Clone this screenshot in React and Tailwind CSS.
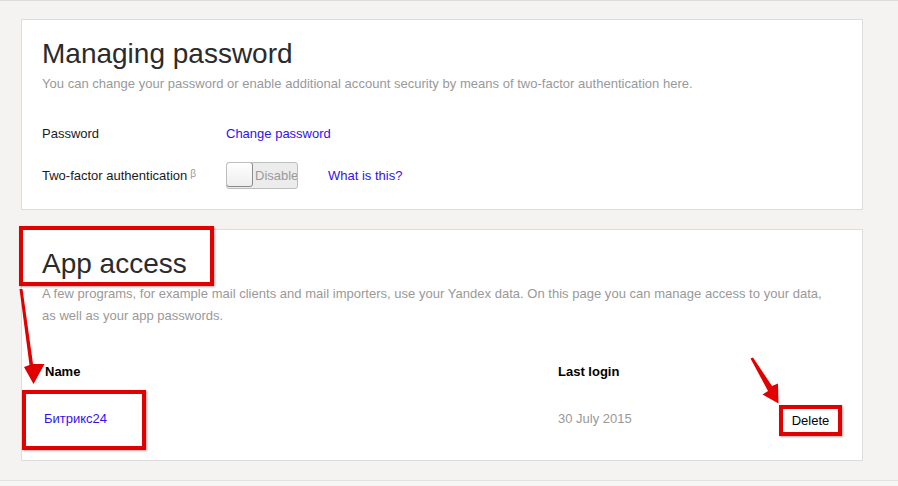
const font = { fontFamily: '"Liberation Sans", Arial, sans-serif' };

function Toggle() {
  return (
    <div className="relative flex h-[27px] w-[72px] overflow-hidden rounded-[3px] border border-[#bdbdbd] bg-[#ececec]">
      <div className="h-full w-[27px] shrink-0 rounded-[3px] border border-[#8a8a8a] bg-gradient-to-b from-white to-[#eeeeee] -m-px" />
      <span className="ml-[3px] text-[13px] leading-[25px] text-[#9a9a9a] whitespace-nowrap">Disable</span>
    </div>
  );
}

export default function App() {
  return (
    <div className="relative h-[486px] w-full overflow-hidden border-t border-[#dcdcdc] bg-[#f4f3f1] pt-[18px]" style={font}>
      {/* Managing password */}
      <section className="ml-[21px] w-[842px] border border-[#dddddd] bg-white px-[20px] pt-[18px] pb-[20px]">
        <h1 className="text-[28px] leading-[32px] text-[#2b2b2b]">Managing password</h1>
        <p className="mt-[3px] text-[13px] leading-[22px] tracking-[0.02px] text-[#999999]">
          You can change your password or enable additional account security by means of two-factor authentication here.
        </p>

        <div className="mt-[28px] flex text-[13px] leading-[22px]">
          <div className="w-[184px] text-[#1a1a1a]">Password</div>
          <a className="text-[#3311ee]">Change password</a>
        </div>

        <div className="mt-[17px] flex items-center text-[13px] leading-[22px]">
          <div className="w-[184px] text-[#1a1a1a]">
            Two-factor authentication
            <sup className="relative -top-[3px] ml-[3px] text-[10px] text-[#999999]">β</sup>
          </div>
          <Toggle />
          <a className="ml-[30px] text-[#3311ee]">What is this?</a>
        </div>
      </section>

      {/* App access */}
      <section className="mt-[19px] ml-[21px] w-[842px] border border-[#dddddd] bg-white px-[20px] pt-[18px] pb-[24px]">
        <h1 className="text-[28px] leading-[32px] text-[#2b2b2b]">App access</h1>
        <p className="mt-[3px] max-w-[792px] text-[13px] leading-[22px] tracking-[0.02px] text-[#999999]">
          A few programs, for example mail clients and mail importers, use your Yandex data. On this page you can manage access to your data, as well as your app passwords.
        </p>

        <div className="mt-[34px] grid grid-cols-[516px_1fr_auto] text-[13px] leading-[22px]">
          <div className="pl-[3px] font-bold text-black">Name</div>
          <div className="font-bold text-black">Last login</div>
          <div />
        </div>

        <div className="mt-[22px] grid grid-cols-[516px_1fr_auto] items-start text-[13px] leading-[22px]">
          <a className="pt-[3px] pl-[2px] text-[#3311ee]">Битрикс24</a>
          <div className="pt-[3px] text-[#999999]">30 July 2015</div>
          <button className="flex h-[31px] w-[63px] items-center justify-center border-4 border-[#e10000] bg-white pt-[1px] text-[13px] text-black shadow-[1px_1px_2px_rgba(0,0,0,0.35)]">
            Delete
          </button>
        </div>
      </section>

      <div className="mt-[19px] h-full border-t border-[#e2e2e2] bg-[#f6f6f5]" />

      {/* Annotation boxes */}
      <div className="absolute left-[19px] top-[225px] h-[60px] w-[195px] border-4 border-[#e10000] shadow-[1px_1px_2px_rgba(0,0,0,0.35)]" />
      <div className="absolute left-[22px] top-[389px] h-[60px] w-[124px] border-4 border-[#e10000] shadow-[1px_1px_2px_rgba(0,0,0,0.35)]" />

      {/* Annotation arrows */}
      <svg className="pointer-events-none absolute left-0 top-0" width="898" height="486" viewBox="0 0 898 486">
        <polygon points="19.5,288 22.5,288 33,363 44.5,363 33.5,383 24,366 29.5,364" fill="#e10000" />
        <polygon points="750.5,357.5 753,356.5 772,385 778,382.5 778.5,402.5 762.5,393.5 768,390" fill="#e10000" />
      </svg>
    </div>
  );
}
